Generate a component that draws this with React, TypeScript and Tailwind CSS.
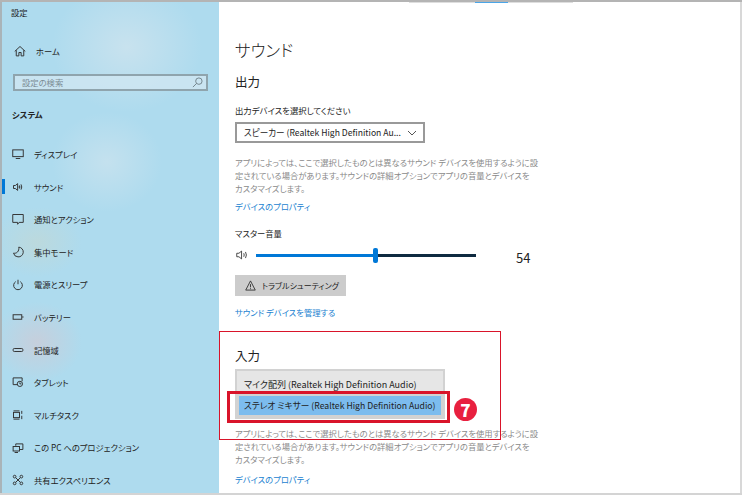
import React from "react";

const Font = '[font-family:"Noto_Sans_CJK_JP","Noto_Sans",sans-serif] [font-feature-settings:"palt"]';

const Ico = ({ children }: { children: React.ReactNode }) => (
  <svg width="12" height="12" viewBox="0 0 16 16" fill="none" stroke="#333" strokeWidth="1.300" className="shrink-0">
    {children}
  </svg>
);

const icons: Record<string, React.ReactNode> = {
  display: <><rect x="1" y="2.500" width="14" height="9" /><path d="M5 14h6" /></>,
  sound: <><path d="M2 6h2.500l3-2.500v9L4.500 10H2z" /><path d="M10 6q1 2 0 4M12 4.500q2 3.500 0 7M9.500 7q.5 1 0 2" /></>,
  notify: <path d="M1 2h14v10.500H9.500L7.500 15v-2.500H1z" />,
  focus: <path d="M9 1.500a6.500 6.500 0 0 1-1 13 6.500 6.500 0 0 1-6-5C6 10.500 10 7 9 1.500z" />,
  power: <><path d="M5 3.500a5.800 5.800 0 1 0 6 0" /><path d="M8 1V7" /></>,
  battery: <><rect x="1.500" y="5" width="11.500" height="6" /><path d="M14.500 7v2" /></>,
  storage: <rect x="1.500" y="6" width="13" height="4" rx="1.500" />,
  tablet: <><path d="M7 11.500H1.500v-9h12V7" /><circle cx="10.500" cy="10.500" r="3.500" /><path d="M10.500 8.500v2h2" /></>,
  multi: <><path d="M2 2.500h8M2 13.500h8" /><rect x="2" y="4.500" width="8" height="7" /><path d="M13 2.500v4M13 9v4.500" /></>,
  project: <><path d="M5 5V2.500h9.500V10H10" /><rect x="1.500" y="6" width="8.500" height="6" /><path d="M3.500 14h4.500" /></>,
  share: <><circle cx="3.500" cy="3.500" r="1.800" /><circle cx="12.500" cy="3.500" r="1.800" /><circle cx="3.500" cy="12.500" r="1.800" /><circle cx="12.500" cy="12.500" r="1.800" /><path d="M5 5l6 6M11 5l-6 6" /></>,
};

const items: [string, string][] = [
  ["display", "ディスプレイ"],
  ["sound", "サウンド"],
  ["notify", "通知とアクション"],
  ["focus", "集中モード"],
  ["power", "電源とスリープ"],
  ["battery", "バッテリー"],
  ["storage", "記憶域"],
  ["tablet", "タブレット"],
  ["multi", "マルチタスク"],
  ["project", "この PC へのプロジェクション"],
  ["share", "共有エクスペリエンス"],
];

const Desc = () => (
  <p className="whitespace-nowrap text-[8.300px] leading-[13px] text-[#8a8a8a]">
    アプリによっては、ここで選択したものとは異なるサウンド デバイスを使用するように設
    <br />
    定されている場合があります。サウンドの詳細オプションでアプリの音量とデバイスを
    <br />
    カスタマイズします。
  </p>
);

export default function App() {
  return (
    <div className={`relative flex h-[495px] w-[742px] flex-col overflow-hidden bg-white text-[#222] ${Font}`}>
      <div className="h-[2px] w-full shrink-0 bg-[#b4b4b4]" />
      <div className="flex min-h-0 flex-1">
        <aside className="relative flex w-[219px] shrink-0 flex-col overflow-hidden border-l-2 border-[#a9b4b9] bg-[#aedbee]">
          <div className="absolute left-[50px] top-[-20px] h-[130px] w-[150px] rounded-full bg-[radial-gradient(closest-side,#c8e2ee,transparent)]" />
          <div className="absolute left-[50px] top-[110px] h-[100px] w-[110px] rounded-full bg-[radial-gradient(closest-side,#c4e1ee,transparent)]" />
          <div className="absolute left-[-10px] top-[300px] h-[80px] w-[90px] rounded-full bg-[radial-gradient(closest-side,#c6cfdc,transparent)]" />
          <div className="absolute left-[-10px] top-[205px] h-[70px] w-[90px] rounded-full bg-[radial-gradient(closest-side,#bcd9dd,transparent)]" />
          <div className="relative flex h-full flex-col">
            <div className="pl-[9px] pt-[2px] text-[8.300px] leading-[16px]">設定</div>
            <div className="mt-[25px] flex h-[20px] items-center pl-[12px] text-[8.300px]">
              <Ico><path d="M1 8.500L8 2l7 6.500M3 7v7.500h3.500V10h3v4.500H13V7" /></Ico>
              <span className="ml-[10px]">ホーム</span>
            </div>
            <div className="mx-[11px] mt-[17px] flex h-[22px] items-center justify-between border-2 border-[#8fa4ad] bg-[#cfe6f1]/80 pl-[7px] pr-[3px] text-[8.300px] text-[#7c8c94]">
              <span>設定の検索</span>
              <svg width="11" height="11" viewBox="0 0 12 12" fill="none" stroke="#6f7f87">
                <circle cx="7.500" cy="4.500" r="3.500" />
                <path d="M5 7l-4 4" />
              </svg>
            </div>
            <div className="mt-[15px] h-[16px] pl-[10px] text-[8.300px] font-bold leading-[16px]">システム</div>
            <nav className="mt-[16px] flex flex-col">
              {items.map(([k, label]) => (
                <div key={k} className="relative flex h-[32.600px] items-center pl-[10px] text-[8.300px]">
                  {k === "sound" && <span className="absolute left-0 top-[9px] h-[15px] w-[3px] bg-[#0078d7]" />}
                  <Ico>{icons[k]}</Ico>
                  <span className="ml-[10px] whitespace-nowrap">{label}</span>
                </div>
              ))}
            </nav>
          </div>
        </aside>
        <main className="relative flex min-w-0 flex-1 flex-col border-r-2 border-[#d8d8d8] pl-[16px]">
          <div className="absolute left-[190px] top-0 flex h-[1px] w-[164px] bg-[#dedede]">
            <span className="ml-[66px] h-full w-[33px] bg-[#4aa5e8]" />
          </div>
          <h1 className="mt-[36px] text-[16.500px] font-light leading-[24px]">サウンド</h1>
          <h2 className="mt-[10px] text-[12.500px] leading-[20px]">出力</h2>
          <div className="mt-[11px] text-[8.400px] leading-[14px]">出力デバイスを選択してください</div>
          <div className="mt-[5px] flex h-[21px] w-[190px] items-center justify-between border-2 border-[#999] pl-[7px] pr-[6px] text-[8.600px]">
            <span className="whitespace-nowrap">スピーカー (Realtek High Definition Au...</span>
            <svg width="10" height="6" viewBox="0 0 10 6" fill="none" stroke="#555"><path d="M1 1l4 4 4-4" /></svg>
          </div>
          <div className="mt-[13px]"><Desc /></div>
          <a className="mt-[4px] text-[8.300px] leading-[14px] text-[#1a7fd0]">デバイスのプロパティ</a>
          <div className="mt-[13px] text-[8.300px] leading-[14px]">マスター音量</div>
          <div className="mt-[6px] flex h-[18px] items-center">
            <svg width="14" height="14" viewBox="0 0 16 16" fill="none" stroke="#333" className="shrink-0">
              <path d="M2 6h2.500l3-2.500v9L4.500 10H2z" /><path d="M10 6q1 2 0 4M12 4.500q2 3.500 0 7" />
            </svg>
            <div className="relative ml-[7px] h-[3px] w-[220px] bg-[#0f2a40]">
              <div className="h-full w-[119px] bg-[#0078d7]" />
              <span className="absolute left-[117px] top-[-6px] h-[15px] w-[5px] rounded-[2px] bg-[#0078d7]" />
            </div>
            <span className="ml-[40px] mt-[6px] text-[13px]">54</span>
          </div>
          <div className="mt-[11px] flex h-[21px] w-[111px] items-center bg-[#cccccc] pl-[10px] text-[8px]">
            <svg width="11" height="11" viewBox="0 0 12 12" fill="none" stroke="#333"><path d="M6 1L.8 11h10.400zM6 4.500V8M6 9v1" /></svg>
            <span className="ml-[6px] whitespace-nowrap">トラブルシューティング</span>
          </div>
          <a className="mt-[9px] text-[8.300px] leading-[14px] text-[#1a7fd0]">サウンド デバイスを管理する</a>
          <h2 className="mt-[27px] text-[12.500px] leading-[20px]">入力</h2>
          <div className="mt-[3px] w-[210px] border-2 border-[#d2d2d2] bg-[#e6e6e6]">
            <div className="h-[22px] whitespace-nowrap pl-[7px] text-[9px] leading-[28px]">マイク配列 (Realtek High Definition Audio)</div>
            <div className="h-[24px] border-[2px] border-t-[3px] border-[#d2d2d2] bg-[#7cbcee] pl-[5px] text-[8.700px] leading-[19px] whitespace-nowrap">ステレオ ミキサー (Realtek High Definition Audio)</div>
          </div>
          <div className="mt-[8px]"><Desc /></div>
          <a className="mt-[6px] text-[8.300px] leading-[14px] text-[#1a7fd0]">デバイスのプロパティ</a>
        </main>
      </div>
      <div className="h-[2px] w-full shrink-0 bg-[#d4d4d4]" />
      <div className="absolute left-[219px] top-[331px] h-[109px] w-[282px] border border-[#d9142a]" />
      <div className="absolute left-[227px] top-[391px] h-[32px] w-[223px] border-[3px] border-[#d9142a]" />
      <div className="absolute left-[454px] top-[398px] flex h-[23px] w-[23px] items-center justify-center rounded-full bg-[#e8203f] text-[17px] font-black leading-none text-white">7</div>
    </div>
  );
}
